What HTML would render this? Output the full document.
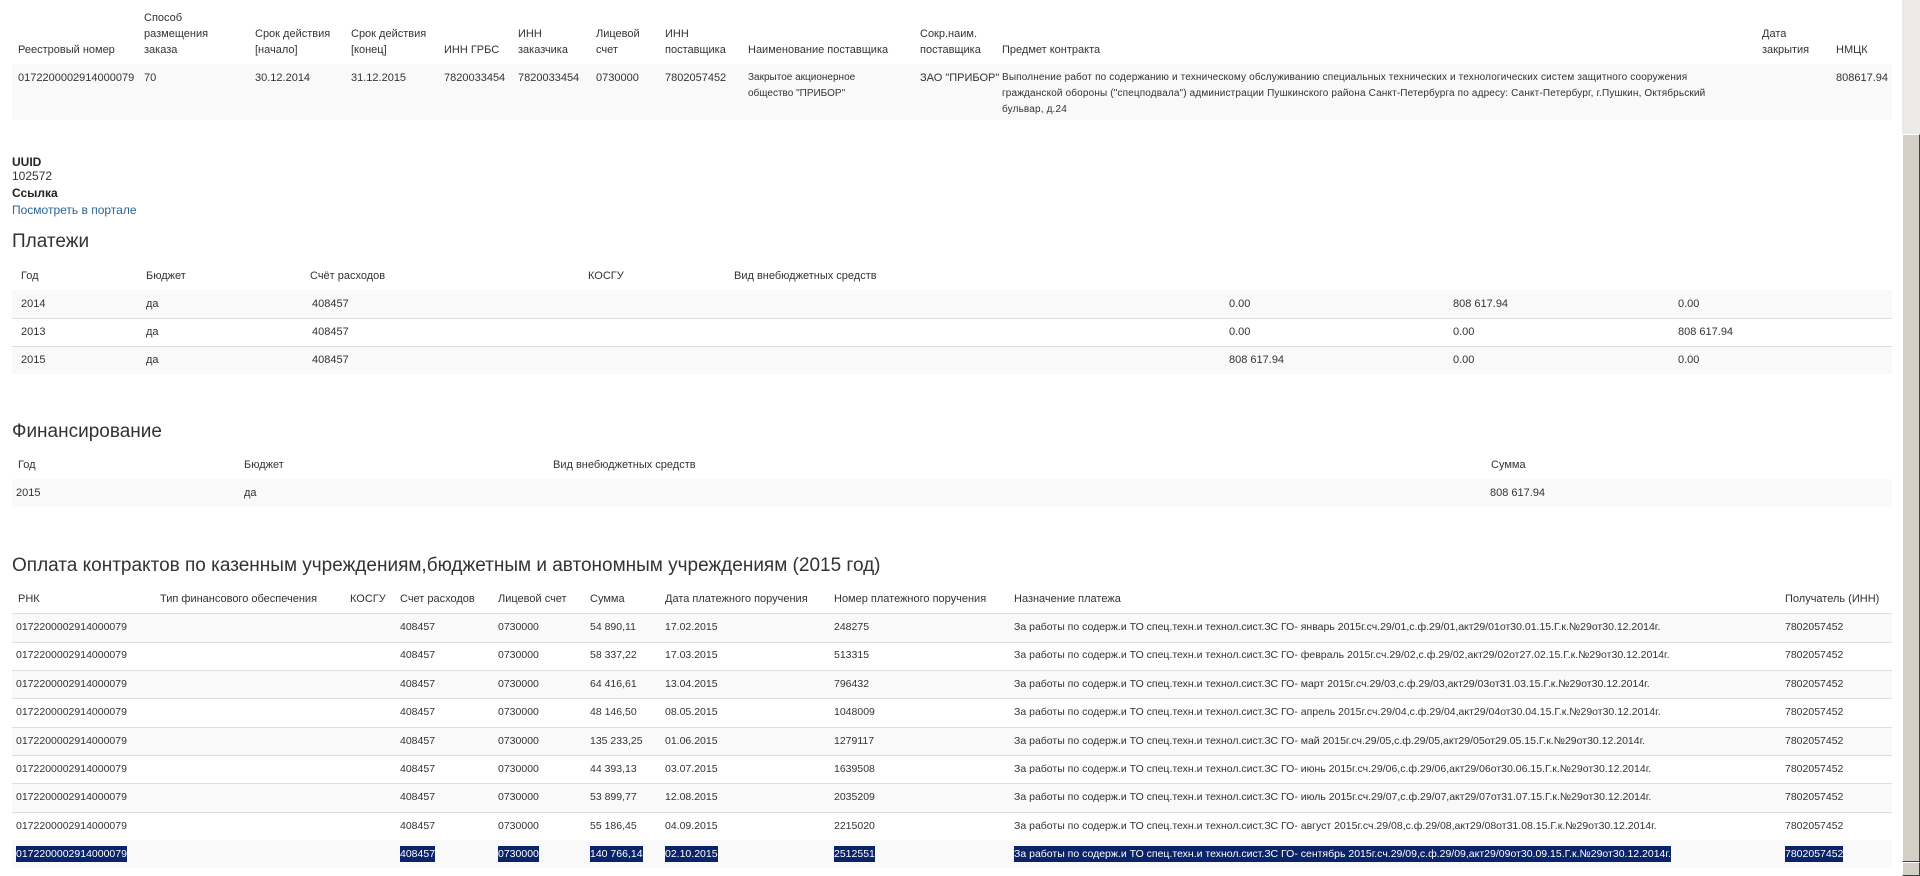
<!DOCTYPE html>
<html><head><meta charset="utf-8">
<style>
*{margin:0;padding:0;box-sizing:border-box}
body{width:1920px;height:876px;overflow:hidden;background:#fff;font-family:"Liberation Sans",Arial,sans-serif;color:#333;font-size:11px;position:relative}
.a{position:absolute;white-space:nowrap;line-height:16px}
.r{position:absolute;left:12px;width:1880px}
.g{background:#f9f9f9}
.bt{border-top:1px solid #ddd}
h2{position:absolute;font-weight:normal;font-size:19px;color:#333;left:12px;white-space:nowrap}
.s{background:#0a246a;color:#fff}
</style></head><body>

<!-- top table -->
<div class="r g" style="top:64px;height:56px"></div>
<div class="a" style="left:18px;top:42px">Реестровый номер</div>
<div class="a" style="left:144px;top:10px">Способ<br>размещения<br>заказа</div>
<div class="a" style="left:255px;top:26px">Срок действия<br>[начало]</div>
<div class="a" style="left:351px;top:26px">Срок действия<br>[конец]</div>
<div class="a" style="left:444px;top:42px">ИНН ГРБС</div>
<div class="a" style="left:518px;top:26px">ИНН<br>заказчика</div>
<div class="a" style="left:596px;top:26px">Лицевой<br>счет</div>
<div class="a" style="left:665px;top:26px">ИНН<br>поставщика</div>
<div class="a" style="left:748px;top:42px">Наименование поставщика</div>
<div class="a" style="left:920px;top:26px">Сокр.наим.<br>поставщика</div>
<div class="a" style="left:1002px;top:42px">Предмет контракта</div>
<div class="a" style="left:1762px;top:26px">Дата<br>закрытия</div>
<div class="a" style="left:1836px;top:42px">НМЦК</div>

<div class="a" style="left:18px;top:70px">0172200002914000079</div>
<div class="a" style="left:144px;top:70px">70</div>
<div class="a" style="left:255px;top:70px">30.12.2014</div>
<div class="a" style="left:351px;top:70px">31.12.2015</div>
<div class="a" style="left:444px;top:70px">7820033454</div>
<div class="a" style="left:518px;top:70px">7820033454</div>
<div class="a" style="left:596px;top:70px">0730000</div>
<div class="a" style="left:665px;top:70px">7802057452</div>
<div class="a" style="left:748px;top:70px;font-size:10px">Закрытое акционерное<br>общество "ПРИБОР"</div>
<div class="a" style="left:920px;top:70px">ЗАО "ПРИБОР"</div>
<div class="a" style="left:1002px;top:70px;font-size:10px;letter-spacing:.15px">Выполнение работ по содержанию и техническому обслуживанию специальных технических и технологических систем защитного сооружения<br>гражданской обороны ("спецподвала") администрации Пушкинского района Санкт-Петербурга по адресу: Санкт-Петербург, г.Пушкин, Октябрьский<br>бульвар, д.24</div>
<div class="a" style="left:1836px;top:70px">808617.94</div>

<div class="a" style="left:12px;top:154px;font-size:12px;font-weight:bold;color:#222">UUID</div>
<div class="a" style="left:12px;top:168px;font-size:12px">102572</div>
<div class="a" style="left:12px;top:185px;font-size:12px;font-weight:bold;color:#222">Ссылка</div>
<div class="a" style="left:12px;top:202px;font-size:12px;color:#2a6496">Посмотреть в портале</div>

<h2 style="top:231px">Платежи</h2>
<div class="a" style="left:21px;top:268px">Год</div>
<div class="a" style="left:146px;top:268px">Бюджет</div>
<div class="a" style="left:310px;top:268px">Счёт расходов</div>
<div class="a" style="left:588px;top:268px">КОСГУ</div>
<div class="a" style="left:734px;top:268px">Вид внебюджетных средств</div>
<div class="r g" style="top:290px;height:28px"></div>
<div class="r bt" style="top:318px;height:28px"></div>
<div class="r g bt" style="top:346px;height:28px"></div>
<div class="a" style="left:21px;top:296px">2014</div><div class="a" style="left:146px;top:296px">да</div><div class="a" style="left:312px;top:296px">408457</div><div class="a" style="left:1229px;top:296px">0.00</div><div class="a" style="left:1453px;top:296px">808 617.94</div><div class="a" style="left:1678px;top:296px">0.00</div>
<div class="a" style="left:21px;top:324px">2013</div><div class="a" style="left:146px;top:324px">да</div><div class="a" style="left:312px;top:324px">408457</div><div class="a" style="left:1229px;top:324px">0.00</div><div class="a" style="left:1453px;top:324px">0.00</div><div class="a" style="left:1678px;top:324px">808 617.94</div>
<div class="a" style="left:21px;top:352px">2015</div><div class="a" style="left:146px;top:352px">да</div><div class="a" style="left:312px;top:352px">408457</div><div class="a" style="left:1229px;top:352px">808 617.94</div><div class="a" style="left:1453px;top:352px">0.00</div><div class="a" style="left:1678px;top:352px">0.00</div>

<h2 style="top:421px">Финансирование</h2>
<div class="a" style="left:18px;top:457px">Год</div>
<div class="a" style="left:244px;top:457px">Бюджет</div>
<div class="a" style="left:553px;top:457px">Вид внебюджетных средств</div>
<div class="a" style="left:1491px;top:457px">Сумма</div>
<div class="r g" style="top:479px;height:28px"></div>
<div class="a" style="left:16px;top:485px">2015</div><div class="a" style="left:244px;top:485px">да</div><div class="a" style="left:1490px;top:485px">808 617.94</div>

<h2 style="top:555px">Оплата контрактов по казенным учреждениям,бюджетным и автономным учреждениям (2015 год)</h2>
<div class="a" style="left:18px;top:591px">РНК</div>
<div class="a" style="left:160px;top:591px">Тип финансового обеспечения</div>
<div class="a" style="left:350px;top:591px">КОСГУ</div>
<div class="a" style="left:400px;top:591px">Счет расходов</div>
<div class="a" style="left:498px;top:591px">Лицевой счет</div>
<div class="a" style="left:590px;top:591px">Сумма</div>
<div class="a" style="left:665px;top:591px">Дата платежного поручения</div>
<div class="a" style="left:834px;top:591px">Номер платежного поручения</div>
<div class="a" style="left:1014px;top:591px">Назначение платежа</div>
<div class="a" style="left:1785px;top:591px">Получатель (ИНН)</div>

<div class="r g bt" style="top:613px;height:29px"></div>
<div class="r bt" style="top:642px;height:28px"></div>
<div class="r g bt" style="top:670px;height:28px"></div>
<div class="r bt" style="top:698px;height:29px"></div>
<div class="r g bt" style="top:727px;height:28px"></div>
<div class="r bt" style="top:755px;height:28px"></div>
<div class="r g bt" style="top:783px;height:29px"></div>
<div class="r bt" style="top:812px;height:28px"></div>
<div class="r g" style="top:840px;height:28px"></div>

<div style="position:absolute;left:0;top:0;font-size:10.5px">
<div class="a" style="left:16px;top:619px">0172200002914000079</div><div class="a" style="left:400px;top:619px">408457</div><div class="a" style="left:498px;top:619px">0730000</div><div class="a" style="left:590px;top:619px">54 890,11</div><div class="a" style="left:665px;top:619px">17.02.2015</div><div class="a" style="left:834px;top:619px">248275</div><div class="a" style="left:1014px;top:619px">За работы по содерж.и ТО спец.техн.и технол.сист.ЗС ГО- январь 2015г.сч.29/01,с.ф.29/01,акт29/01от30.01.15.Г.к.№29от30.12.2014г.</div><div class="a" style="left:1785px;top:619px">7802057452</div>
<div class="a" style="left:16px;top:647px">0172200002914000079</div><div class="a" style="left:400px;top:647px">408457</div><div class="a" style="left:498px;top:647px">0730000</div><div class="a" style="left:590px;top:647px">58 337,22</div><div class="a" style="left:665px;top:647px">17.03.2015</div><div class="a" style="left:834px;top:647px">513315</div><div class="a" style="left:1014px;top:647px">За работы по содерж.и ТО спец.техн.и технол.сист.ЗС ГО- февраль 2015г.сч.29/02,с.ф.29/02,акт29/02от27.02.15.Г.к.№29от30.12.2014г.</div><div class="a" style="left:1785px;top:647px">7802057452</div>
<div class="a" style="left:16px;top:676px">0172200002914000079</div><div class="a" style="left:400px;top:676px">408457</div><div class="a" style="left:498px;top:676px">0730000</div><div class="a" style="left:590px;top:676px">64 416,61</div><div class="a" style="left:665px;top:676px">13.04.2015</div><div class="a" style="left:834px;top:676px">796432</div><div class="a" style="left:1014px;top:676px">За работы по содерж.и ТО спец.техн.и технол.сист.ЗС ГО- март 2015г.сч.29/03,с.ф.29/03,акт29/03от31.03.15.Г.к.№29от30.12.2014г.</div><div class="a" style="left:1785px;top:676px">7802057452</div>
<div class="a" style="left:16px;top:704px">0172200002914000079</div><div class="a" style="left:400px;top:704px">408457</div><div class="a" style="left:498px;top:704px">0730000</div><div class="a" style="left:590px;top:704px">48 146,50</div><div class="a" style="left:665px;top:704px">08.05.2015</div><div class="a" style="left:834px;top:704px">1048009</div><div class="a" style="left:1014px;top:704px">За работы по содерж.и ТО спец.техн.и технол.сист.ЗС ГО- апрель 2015г.сч.29/04,с.ф.29/04,акт29/04от30.04.15.Г.к.№29от30.12.2014г.</div><div class="a" style="left:1785px;top:704px">7802057452</div>
<div class="a" style="left:16px;top:733px">0172200002914000079</div><div class="a" style="left:400px;top:733px">408457</div><div class="a" style="left:498px;top:733px">0730000</div><div class="a" style="left:590px;top:733px">135 233,25</div><div class="a" style="left:665px;top:733px">01.06.2015</div><div class="a" style="left:834px;top:733px">1279117</div><div class="a" style="left:1014px;top:733px">За работы по содерж.и ТО спец.техн.и технол.сист.ЗС ГО- май 2015г.сч.29/05,с.ф.29/05,акт29/05от29.05.15.Г.к.№29от30.12.2014г.</div><div class="a" style="left:1785px;top:733px">7802057452</div>
<div class="a" style="left:16px;top:761px">0172200002914000079</div><div class="a" style="left:400px;top:761px">408457</div><div class="a" style="left:498px;top:761px">0730000</div><div class="a" style="left:590px;top:761px">44 393,13</div><div class="a" style="left:665px;top:761px">03.07.2015</div><div class="a" style="left:834px;top:761px">1639508</div><div class="a" style="left:1014px;top:761px">За работы по содерж.и ТО спец.техн.и технол.сист.ЗС ГО- июнь 2015г.сч.29/06,с.ф.29/06,акт29/06от30.06.15.Г.к.№29от30.12.2014г.</div><div class="a" style="left:1785px;top:761px">7802057452</div>
<div class="a" style="left:16px;top:789px">0172200002914000079</div><div class="a" style="left:400px;top:789px">408457</div><div class="a" style="left:498px;top:789px">0730000</div><div class="a" style="left:590px;top:789px">53 899,77</div><div class="a" style="left:665px;top:789px">12.08.2015</div><div class="a" style="left:834px;top:789px">2035209</div><div class="a" style="left:1014px;top:789px">За работы по содерж.и ТО спец.техн.и технол.сист.ЗС ГО- июль 2015г.сч.29/07,с.ф.29/07,акт29/07от31.07.15.Г.к.№29от30.12.2014г.</div><div class="a" style="left:1785px;top:789px">7802057452</div>
<div class="a" style="left:16px;top:818px">0172200002914000079</div><div class="a" style="left:400px;top:818px">408457</div><div class="a" style="left:498px;top:818px">0730000</div><div class="a" style="left:590px;top:818px">55 186,45</div><div class="a" style="left:665px;top:818px">04.09.2015</div><div class="a" style="left:834px;top:818px">2215020</div><div class="a" style="left:1014px;top:818px">За работы по содерж.и ТО спец.техн.и технол.сист.ЗС ГО- август 2015г.сч.29/08,с.ф.29/08,акт29/08от31.08.15.Г.к.№29от30.12.2014г.</div><div class="a" style="left:1785px;top:818px">7802057452</div>
<div class="a s" style="left:16px;top:846px">0172200002914000079</div><div class="a s" style="left:400px;top:846px">408457</div><div class="a s" style="left:498px;top:846px">0730000</div><div class="a s" style="left:590px;top:846px">140 766,14</div><div class="a s" style="left:665px;top:846px">02.10.2015</div><div class="a s" style="left:834px;top:846px">2512551</div><div class="a s" style="left:1014px;top:846px">За работы по содерж.и ТО спец.техн.и технол.сист.ЗС ГО- сентябрь 2015г.сч.29/09,с.ф.29/09,акт29/09от30.09.15.Г.к.№29от30.12.2014г.</div><div class="a s" style="left:1785px;top:846px">7802057452</div>
</div>

<!-- scrollbar -->
<div style="position:absolute;left:1902px;top:0;width:18px;height:876px;background:#eceae6"></div>
<div style="position:absolute;left:1902px;top:134px;width:18px;height:728px;background:#d4d0c8;border:1px solid;border-color:#fff #404040 #404040 #fff"></div>
<div style="position:absolute;left:1902px;top:862px;width:18px;height:14px;background:#d4d0c8;border:1px solid;border-color:#fff #404040 #404040 #fff"></div>
</body></html>
